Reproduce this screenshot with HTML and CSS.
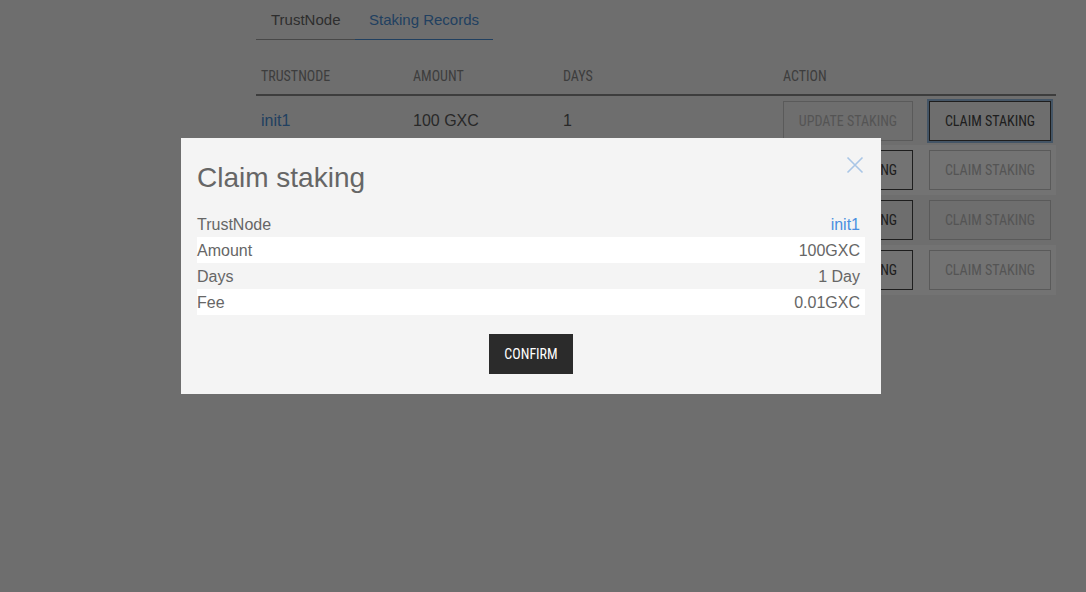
FILE: index.html
```html
<!DOCTYPE html>
<html>
<head>
<meta charset="utf-8">
<link rel="stylesheet" href="styles.css">
</head>
<body>
<div class="page">
  <div class="tabs">
    <div class="tab">TrustNode</div>
    <div class="tab active">Staking Records</div>
  </div>
  <table class="records">
    <thead>
      <tr>
        <th class="c1">TRUSTNODE</th>
        <th class="c2">AMOUNT</th>
        <th class="c3">DAYS</th>
        <th class="c4">ACTION</th>
      </tr>
    </thead>
    <tbody>
      <tr>
        <td class="node">init1</td><td>100 GXC</td><td>1</td>
        <td class="actions"><button class="btn update" disabled>UPDATE STAKING</button><button class="btn claim focus">CLAIM STAKING</button></td>
      </tr>
      <tr class="even">
        <td class="node">init2</td><td>100 GXC</td><td>1</td>
        <td class="actions"><button class="btn update">UPDATE STAKING</button><button class="btn claim" disabled>CLAIM STAKING</button></td>
      </tr>
      <tr>
        <td class="node">init3</td><td>100 GXC</td><td>1</td>
        <td class="actions"><button class="btn update">UPDATE STAKING</button><button class="btn claim" disabled>CLAIM STAKING</button></td>
      </tr>
      <tr class="even">
        <td class="node">init4</td><td>100 GXC</td><td>1</td>
        <td class="actions"><button class="btn update">UPDATE STAKING</button><button class="btn claim" disabled>CLAIM STAKING</button></td>
      </tr>
    </tbody>
  </table>
</div>

<div class="overlay">
  <div class="modal">
    <span class="close" aria-label="close">
      <svg width="18" height="18" viewBox="0 0 18 18"><path d="M1.5 1.5 L16.5 16.5 M16.5 1.5 L1.5 16.5" stroke="#a9c6e6" stroke-width="1.6" fill="none"/></svg>
    </span>
    <h2 class="title">Claim staking</h2>
    <div class="info">
      <div class="row"><span>TrustNode</span><span class="link">init1</span></div>
      <div class="row alt"><span>Amount</span><span>100GXC</span></div>
      <div class="row"><span>Days</span><span>1 Day</span></div>
      <div class="row alt"><span>Fee</span><span>0.01GXC</span></div>
    </div>
    <div class="footer">
      <button class="confirm">CONFIRM</button>
    </div>
  </div>
</div>
</body>
</html>
```

FILE: styles.css
```css
html, body {
  margin: 0;
  padding: 0;
}
body {
  background: #f4f4f4;
  font-family: "Liberation Sans", Arial, sans-serif;
  color: #555;
  width: 1086px;
  height: 592px;
  overflow: hidden;
}
.page {
  margin-left: 256px;
  width: 800px;
}
.tabs {
  display: flex;
  height: 40px;
}
.tab {
  flex: none;
  box-sizing: border-box;
  white-space: nowrap;
  font-size: 15px;
  line-height: 40px;
  padding-left: 15px;
  color: #666;
  border-bottom: 1px solid #a0a0a0;
  width: 99px;
}
.tab.active {
  color: #4a8fd6;
  border-bottom-color: #4a8fd6;
  padding-left: 14px;
  width: 138px;
}
.records {
  margin-top: 17px;
  width: 800px;
  border-collapse: collapse;
  table-layout: fixed;
}
.records th {
  font-family: "Roboto Condensed", "Liberation Sans Narrow", "DejaVu Sans Condensed", sans-serif;
  font-stretch: condensed;
  font-weight: normal;
  font-size: 14px;
  color: #888;
  text-align: left;
  height: 37px;
  padding: 0 5px;
  border-bottom: 2px solid #888;
  vertical-align: middle;
}
.c1 { width: 142px; }
.c2 { width: 140px; }
.c3 { width: 210px; }
.records td {
  height: 50px;
  padding: 0 5px;
  font-size: 16px;
  color: #5a5a5a;
  vertical-align: middle;
  box-sizing: border-box;
}
.records tr.even td {
  background: #ffffff;
}
.records td.node {
  color: #4a8fd6;
}
.actions {
  white-space: nowrap;
}
.btn {
  font-family: "Roboto Condensed", "Liberation Sans Narrow", "DejaVu Sans Condensed", sans-serif;
  font-stretch: condensed;
  font-size: 14px;
  height: 40px;
  background: transparent;
  border: 1px solid #444;
  color: #444;
  padding: 0;
  margin: 0;
  vertical-align: middle;
}
.btn.update { width: 130px; margin-right: 16px; }
.btn.claim { width: 122px; }
.btn:disabled {
  border-color: #c8c8c8;
  color: #bbb;
}
.btn.focus {
  box-shadow: 0 0 0 2px rgba(74, 143, 214, 0.55);
}
.overlay {
  position: fixed;
  inset: 0;
  background: rgba(0, 0, 0, 0.55);
}
.modal {
  position: absolute;
  left: 181px;
  top: 138px;
  width: 668px;
  padding: 21px 16px 20px 16px;
  background: #f4f4f4;
}
.close {
  position: absolute;
  top: 18px;
  right: 17px;
  width: 18px;
  height: 18px;
  display: block;
}
.close svg { display: block; }
.title {
  margin: 0;
  font-weight: normal;
  font-size: 28px;
  line-height: 38px;
  color: #666;
}
.info {
  margin-top: 14px;
}
.row {
  display: flex;
  justify-content: space-between;
  height: 26px;
  line-height: 28px;
  font-size: 16px;
  color: #666;
  padding-right: 5px;
}
.row.alt {
  background: #ffffff;
}
.link {
  color: #4a8fe0;
}
.footer {
  display: flex;
  justify-content: center;
  margin-top: 19px;
}
.confirm {
  font-family: "Roboto Condensed", "Liberation Sans Narrow", "DejaVu Sans Condensed", sans-serif;
  font-stretch: condensed;
  font-size: 14px;
  width: 84px;
  height: 40px;
  background: #2b2b2b;
  color: #fff;
  border: none;
  padding: 0;
}
```
